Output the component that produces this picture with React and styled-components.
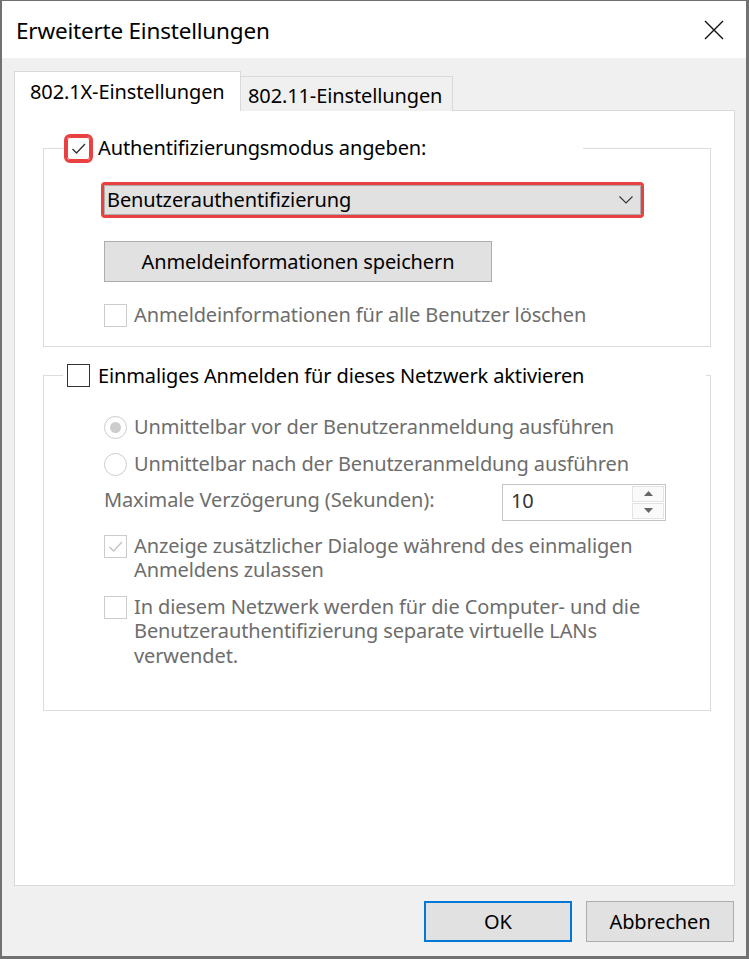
import React from "react";
import styled, { createGlobalStyle, css } from "styled-components";

const FONT = `"Noto Sans", "Open Sans", sans-serif`;
const DISABLED = "#6d6d6d";

const GlobalStyle = createGlobalStyle`
  html, body { margin: 0; padding: 0; background: #707070; }
  * { box-sizing: border-box; }
  #root { width: 749px; height: 959px; }
`;

const Window = styled.div`
  width: 749px;
  height: 959px;
  display: flex;
  flex-direction: column;
  border-style: solid;
  border-color: #717171;
  border-width: 1px 3px 3px 2px;
  background: #f0f0f0;
  font-family: ${FONT};
  font-size: 20px;
  color: #000;
  letter-spacing: -0.12px;
`;

const TitleBar = styled.div`
  height: 57px;
  flex: none;
  background: #fff;
  display: flex;
  align-items: center;
  justify-content: space-between;
  padding: 1px 22px 0 14px;
`;

const Title = styled.div`
  font-size: 22.5px;
  letter-spacing: -0.2px;
`;

const CloseIcon = styled.svg`
  width: 20px;
  height: 20px;
  display: block;
  margin-top: -1px;
`;

const Body = styled.div`
  flex: 1;
  display: flex;
  flex-direction: column;
  padding: 13px 11px 0 12px;
`;

const TabRow = styled.div`
  display: flex;
  align-items: flex-end;
  height: 40px;
  margin-bottom: -1px;
  position: relative;
  z-index: 1;
`;

const Tab = styled.div`
  display: flex;
  align-items: center;
  border: 1px solid #d9d9d9;
  border-bottom: none;
  white-space: nowrap;
  ${(p) =>
    p.$active
      ? css`
          width: 227px;
          height: 40px;
          background: #fff;
          padding: 0 0 1px 15px;
        `
      : css`
          width: 212px;
          height: 35px;
          background: #f0f0f0;
          border-left: none;
          padding: 2px 0 0 7px;
        `}
`;

const Panel = styled.div`
  width: 721px;
  height: 776px;
  flex: none;
  background: #fff;
  border: 1px solid #d9d9d9;
  padding: 24px 23px 0 28px;
  display: flex;
  flex-direction: column;
`;

const Group = styled.fieldset`
  margin: ${(p) => p.$top || 0}px 0 0 0;
  padding: 0;
  border: 1px solid #dcdcdc;
  min-width: 0;
`;

const Legend = styled.legend`
  margin-left: ${(p) => p.$offset}px;
  width: ${(p) => p.$width}px;
  padding: 0 0 0 ${(p) => p.$pad}px;
  height: 26px;
  display: flex;
  align-items: center;
  gap: 8px;
  line-height: 26px;
  white-space: nowrap;
`;

const GroupContent = styled.div`
  display: flex;
  flex-direction: column;
  align-items: flex-start;
  padding: 0 0 ${(p) => p.$bottom}px 60px;
`;

const BoxWrap = styled.span`
  flex: none;
  width: 23px;
  height: 23px;
  display: flex;
  align-items: center;
  justify-content: center;
  background: #fff;
  border: 1px solid ${(p) => (p.$disabled ? "#cccccc" : "#333333")};
  ${(p) =>
    p.$highlight &&
    css`
      border-color: #e8413f;
      outline: 3px solid #e8413f;
      outline-offset: 0;
      border-radius: 3px;
    `}
`;

const Check = styled.svg`
  width: 17px;
  height: 17px;
  display: block;
`;

const CheckBox = ({ checked, disabled, highlight }) => (
  <BoxWrap $disabled={disabled} $highlight={highlight}>
    {checked && (
      <Check viewBox="0 0 17 17">
        <polyline
          points="2.5,9 6.5,13 15,4"
          fill="none"
          stroke={disabled ? "#c4c4c4" : "#333"}
          strokeWidth="1.4"
        />
      </Check>
    )}
  </BoxWrap>
);

const RadioCircle = styled.span`
  flex: none;
  width: 23px;
  height: 23px;
  border-radius: 50%;
  border: 1px solid #cccccc;
  background: #fff;
  display: flex;
  align-items: center;
  justify-content: center;
  &::after {
    content: "";
    display: ${(p) => (p.$checked ? "block" : "none")};
    width: 11px;
    height: 11px;
    border-radius: 50%;
    background: #cccccc;
  }
`;

const OptionRow = styled.div`
  display: flex;
  align-items: flex-start;
  gap: 7px;
  margin-top: ${(p) => p.$top}px;
  color: ${DISABLED};
  line-height: 24.5px;
`;

const OptionText = styled.span`
  margin-top: -1px;
  max-width: 530px;
`;

const Dropdown = styled.div`
  margin-top: 24px;
  width: 537px;
  height: 30px;
  background: #e1e1e1;
  border: 1px solid #adadad;
  border-radius: 1px;
  outline: 3px solid #e8413f;
  outline-offset: 0;
  display: flex;
  align-items: center;
  justify-content: space-between;
  padding: 0 7px 1px 2px;
`;

const Chevron = styled.svg`
  width: 14px;
  height: 8px;
  display: block;
`;

const PushButton = styled.div`
  width: ${(p) => p.$width}px;
  height: 41px;
  margin-top: ${(p) => p.$top || 0}px;
  background: #e1e1e1;
  border: ${(p) => (p.$default ? "2px solid #0078d7" : "1px solid #adadad")};
  display: flex;
  align-items: center;
  justify-content: center;
  padding-bottom: 1px;
`;

const DelayRow = styled.div`
  display: flex;
  align-items: center;
  margin-top: 7px;
  color: ${DISABLED};
`;

const DelayLabel = styled.span`
  width: 398px;
  margin-top: -5px;
`;

const SpinBox = styled.div`
  width: 164px;
  height: 37px;
  border: 1px solid #c4c4c4;
  display: flex;
`;

const SpinValue = styled.span`
  flex: 1;
  padding: 0 0 3px 8px;
  display: flex;
  align-items: center;
  color: #333;
`;

const SpinButtons = styled.div`
  width: 34px;
  display: flex;
  flex-direction: column;
  padding: 1px;
  gap: 1px;
`;

const SpinButton = styled.div`
  flex: 1;
  border: 1px solid #e3e3e3;
  background: #fafafa;
  display: flex;
  align-items: center;
  justify-content: center;
`;

const Arrow = styled.svg`
  width: 9px;
  height: 5px;
  display: block;
`;

const ButtonBar = styled.div`
  display: flex;
  justify-content: flex-end;
  gap: 14px;
  padding: 15px 1px 0 0;
`;

export default function App() {
  return (
    <>
      <GlobalStyle />
      <Window>
        <TitleBar>
          <Title>Erweiterte Einstellungen</Title>
          <CloseIcon viewBox="0 0 20 20">
            <path d="M1 1 L19 19 M19 1 L1 19" stroke="#111" strokeWidth="1.4" />
          </CloseIcon>
        </TitleBar>
        <Body>
          <TabRow>
            <Tab $active>802.1X-Einstellungen</Tab>
            <Tab>802.11-Einstellungen</Tab>
          </TabRow>
          <Panel>
            <Group>
              <Legend $offset={21} $width={518} $pad={2}>
                <CheckBox checked highlight />
                <span>Authentifizierungsmodus angeben:</span>
              </Legend>
              <GroupContent $bottom={18}>
                <Dropdown>
                  <span>Benutzerauthentifizierung</span>
                  <Chevron viewBox="0 0 14 8">
                    <polyline points="0.5,0.5 7,7 13.5,0.5" fill="none" stroke="#333" strokeWidth="1.1" />
                  </Chevron>
                </Dropdown>
                <PushButton $width={388} $top={26}>
                  Anmeldeinformationen speichern
                </PushButton>
                <OptionRow $top={22}>
                  <CheckBox disabled />
                  <OptionText>Anmeldeinformationen für alle Benutzer löschen</OptionText>
                </OptionRow>
              </GroupContent>
            </Group>
            <Group $top={16}>
              <Legend $offset={19} $width={643} $pad={4}>
                <CheckBox />
                <span>Einmaliges Anmelden für dieses Netzwerk aktivieren</span>
              </Legend>
              <GroupContent $bottom={42}>
                <OptionRow $top={27}>
                  <RadioCircle $checked />
                  <OptionText>Unmittelbar vor der Benutzeranmeldung ausführen</OptionText>
                </OptionRow>
                <OptionRow $top={14}>
                  <RadioCircle />
                  <OptionText>Unmittelbar nach der Benutzeranmeldung ausführen</OptionText>
                </OptionRow>
                <DelayRow>
                  <DelayLabel>Maximale Verzögerung (Sekunden):</DelayLabel>
                  <SpinBox>
                    <SpinValue>10</SpinValue>
                    <SpinButtons>
                      <SpinButton>
                        <Arrow viewBox="0 0 9 5">
                          <polygon points="0,5 4.5,0 9,5" fill="#666" />
                        </Arrow>
                      </SpinButton>
                      <SpinButton>
                        <Arrow viewBox="0 0 9 5">
                          <polygon points="0,0 9,0 4.5,5" fill="#666" />
                        </Arrow>
                      </SpinButton>
                    </SpinButtons>
                  </SpinBox>
                </DelayRow>
                <OptionRow $top={14}>
                  <CheckBox checked disabled />
                  <OptionText>
                    Anzeige zusätzlicher Dialoge während des einmaligen Anmeldens zulassen
                  </OptionText>
                </OptionRow>
                <OptionRow $top={13}>
                  <CheckBox disabled />
                  <OptionText>
                    In diesem Netzwerk werden für die Computer- und die Benutzerauthentifizierung separate virtuelle LANs verwendet.
                  </OptionText>
                </OptionRow>
              </GroupContent>
            </Group>
          </Panel>
          <ButtonBar>
            <PushButton $width={148} $default>OK</PushButton>
            <PushButton $width={148}>Abbrechen</PushButton>
          </ButtonBar>
        </Body>
      </Window>
    </>
  );
}
